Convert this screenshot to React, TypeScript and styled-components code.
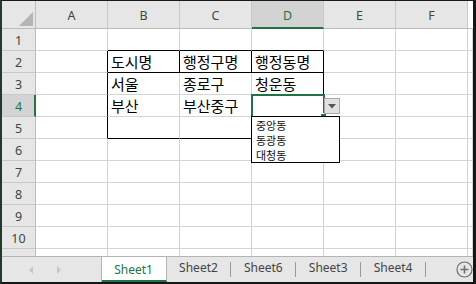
import React from "react";
import styled, { createGlobalStyle } from "styled-components";

const GlobalStyle = createGlobalStyle`
  html, body {
    margin: 0;
    padding: 0;
    background: #fff;
  }
  body {
    font-family: "Noto Sans", "Noto Sans CJK KR", sans-serif;
  }
`;

const GREEN = "#217346";
const GRID = "#d4d4d4";
const HEAD_BG = "#e6e6e6";
const HEAD_LINE = "#bcbcbc";

const Frame = styled.div`
  width: 476px;
  height: 284px;
  box-sizing: border-box;
  border-top: 1px solid #1a1a1a;
  border-left: 2px solid #24392d;
  border-right: 3px solid #161616;
  border-bottom: 2px solid #161616;
  display: flex;
  flex-direction: column;
  overflow: hidden;
  background: #fff;
`;

const SheetArea = styled.div`
  position: relative;
  height: 255px;
  flex: none;
  overflow: hidden;
`;

const Grid = styled.div`
  display: grid;
  grid-template-columns: 34px repeat(6, 72px) 1fr;
  grid-template-rows: 28px repeat(11, 22px);
`;

const Corner = styled.div`
  box-sizing: border-box;
  background: ${HEAD_BG};
  border-right: 1px solid ${HEAD_LINE};
  border-bottom: 1px solid ${HEAD_LINE};
  display: flex;
  align-items: flex-end;
  justify-content: flex-end;
  padding: 0 2px 2px 0;
`;

const ColHead = styled.div<{ $active?: boolean; $blank?: boolean }>`
  box-sizing: border-box;
  background: ${(p) => (p.$blank ? "#fff" : p.$active ? "#d3d3d3" : HEAD_BG)};
  color: ${(p) => (p.$active ? GREEN : "#444")};
  border-right: 1px solid ${(p) => (p.$blank ? "transparent" : "#c8c8c8")};
  border-bottom: ${(p) => (p.$active ? `2px solid ${GREEN}` : `1px solid ${HEAD_LINE}`)};
  display: flex;
  align-items: center;
  justify-content: center;
  padding-top: ${(p) => (p.$active ? "3px" : "2px")};
  font-size: 12.5px;
`;

const RowHead = styled.div<{ $active?: boolean }>`
  box-sizing: border-box;
  background: ${(p) => (p.$active ? "#d3d3d3" : HEAD_BG)};
  color: ${(p) => (p.$active ? GREEN : "#444")};
  border-right: ${(p) => (p.$active ? `2px solid ${GREEN}` : `1px solid ${HEAD_LINE}`)};
  border-bottom: 1px solid #c8c8c8;
  display: flex;
  align-items: center;
  justify-content: center;
  padding-top: 2px;
  padding-left: ${(p) => (p.$active ? "1px" : "0")};
  font-size: 12.5px;
`;

const Cell = styled.div<{ $rb?: boolean; $bb?: boolean }>`
  box-sizing: border-box;
  border-right: 1px solid ${(p) => (p.$rb ? "#000" : GRID)};
  border-bottom: 1px solid ${(p) => (p.$bb ? "#000" : GRID)};
  padding: 1px 0 0 3px;
  font-family: "Noto Sans CJK KR", "Noto Sans", sans-serif;
  font-size: 15px;
  line-height: 20px;
  color: #000;
  white-space: nowrap;
  overflow: visible;
`;

const Selection = styled.div`
  position: absolute;
  left: 249px;
  top: 93px;
  width: 74px;
  height: 24px;
  box-sizing: border-box;
  border: 2px solid ${GREEN};
`;

const FillHandle = styled.div`
  position: absolute;
  left: 318px;
  top: 112px;
  width: 5px;
  height: 5px;
  background: ${GREEN};
  border: 1px solid #fff;
`;

const DropButton = styled.div`
  position: absolute;
  left: 322px;
  top: 97px;
  width: 16px;
  height: 16px;
  box-sizing: border-box;
  background: #e1e1e1;
  border: 1px solid #a9a9a9;
  display: flex;
  align-items: center;
  justify-content: center;
`;

const DropList = styled.ul`
  position: absolute;
  left: 249px;
  top: 115px;
  width: 89px;
  margin: 0;
  padding: 1px 0 0;
  box-sizing: border-box;
  height: 47px;
  list-style: none;
  background: #fff;
  border: 1px solid #000;
`;

const DropItem = styled.li`
  font-family: "Noto Sans CJK KR", "Noto Sans", sans-serif;
  font-size: 11px;
  line-height: 15px;
  padding-left: 4px;
  color: #111;
`;

const TabBar = styled.div`
  height: 26px;
  flex: none;
  box-sizing: border-box;
  display: flex;
  background: ${HEAD_BG};
  border-top: 1px solid #b4b4b4;
`;

const NavArea = styled.div`
  width: 101px;
  box-sizing: border-box;
  border-right: 1px solid #b4b4b4;
  display: flex;
  align-items: center;
  padding-left: 26px;
  gap: 22px;
`;

const Tab = styled.div<{ $active?: boolean }>`
  position: relative;
  width: 66px;
  box-sizing: border-box;
  display: flex;
  align-items: center;
  justify-content: center;
  font-size: 12px;
  color: ${(p) => (p.$active ? GREEN : "#444")};
  background: ${(p) => (p.$active ? "#fff" : "transparent")};
  border-right: 1px solid ${(p) => (p.$active ? "#b4b4b4" : "transparent")};
  border-bottom: 2px solid ${(p) => (p.$active ? GREEN : "transparent")};
  padding-top: ${(p) => (p.$active ? "1px" : "0")};
  padding-bottom: ${(p) => (p.$active ? "0" : "2px")};

  &::after {
    content: "";
    display: ${(p) => (p.$active ? "none" : "block")};
    position: absolute;
    right: -1px;
    top: 5px;
    height: 15px;
    border-right: 1px solid #9a9a9a;
  }
`;

const AddSheet = styled.div`
  display: flex;
  align-items: center;
  padding-left: 30px;
`;

const cols = ["A", "B", "C", "D", "E", "F"];

type Data = Record<string, string>;
const data: Data = {
  B2: "도시명",
  C2: "행정구명",
  D2: "행정동명",
  B3: "서울",
  C3: "종로구",
  D3: "청운동",
  B4: "부산",
  C4: "부산중구",
};

// black borders of the B2:D5 table
const rightBlack = new Set(["A2", "A3", "A4", "A5", "B2", "C2", "D2", "D3", "D4", "D5"]);
const bottomBlack = new Set(["B1", "C1", "D1", "B2", "C2", "D2", "B5", "C5", "D5"]);

const Arrow = ({ dir }: { dir: "left" | "right" }) => (
  <svg width="6" height="8" viewBox="0 0 6 8">
    <path d={dir === "left" ? "M5 0 L1 4 L5 8 Z" : "M1 0 L5 4 L1 8 Z"} fill="#c6c6c6" />
  </svg>
);

export default function App() {
  const rows = Array.from({ length: 11 }, (_, i) => i + 1);
  return (
    <>
      <GlobalStyle />
      <Frame>
        <SheetArea>
          <Grid>
            <Corner>
              <svg width="14" height="14" viewBox="0 0 14 14">
                <path d="M14 0 L14 14 L0 14 Z" fill="#b4b4b4" />
              </svg>
            </Corner>
            {cols.map((c) => (
              <ColHead key={c} $active={c === "D"}>
                {c}
              </ColHead>
            ))}
            <ColHead $blank />
            {rows.map((r) => (
              <React.Fragment key={r}>
                <RowHead $active={r === 4}>{r}</RowHead>
                {cols.map((c) => {
                  const id = `${c}${r}`;
                  return (
                    <Cell key={id} $rb={rightBlack.has(id)} $bb={bottomBlack.has(id)}>
                      {data[id] ?? ""}
                    </Cell>
                  );
                })}
                <Cell />
              </React.Fragment>
            ))}
          </Grid>
          <Selection />
          <FillHandle />
          <DropList>
            <DropItem>중앙동</DropItem>
            <DropItem>동광동</DropItem>
            <DropItem>대청동</DropItem>
          </DropList>
          <DropButton>
            <svg width="8" height="5" viewBox="0 0 8 5">
              <path d="M0 0 L8 0 L4 4.5 Z" fill="#555" />
            </svg>
          </DropButton>
        </SheetArea>
        <TabBar>
          <NavArea>
            <Arrow dir="left" />
            <Arrow dir="right" />
          </NavArea>
          <Tab $active>Sheet1</Tab>
          <Tab>Sheet2</Tab>
          <Tab>Sheet6</Tab>
          <Tab>Sheet3</Tab>
          <Tab>Sheet4</Tab>
          <AddSheet>
            <svg width="17" height="17" viewBox="0 0 17 17">
              <circle cx="8.5" cy="8.5" r="7.5" fill="none" stroke="#6e6e6e" strokeWidth="1.2" />
              <path d="M8.5 4.5 V12.5 M4.5 8.5 H12.5" stroke="#6e6e6e" strokeWidth="1.6" />
            </svg>
          </AddSheet>
        </TabBar>
      </Frame>
    </>
  );
}
